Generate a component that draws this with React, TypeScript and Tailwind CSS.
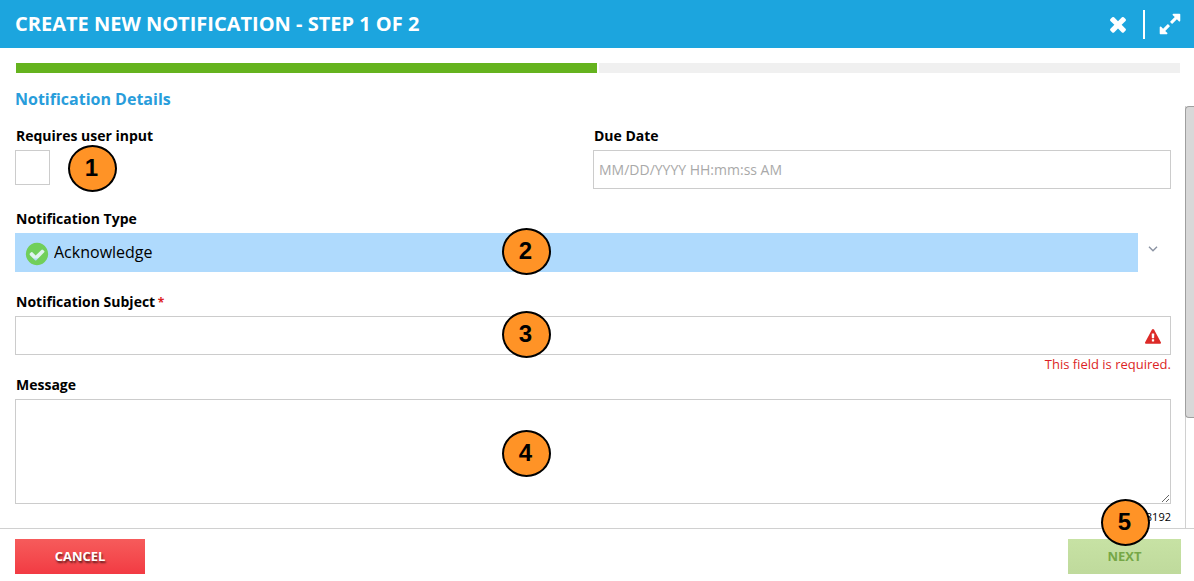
import type { ReactNode } from "react";

const TIMES =
  "M1490 1322q0 40-28 68l-136 136q-28 28-68 28t-68-28l-294-294-294 294q-28 28-68 28t-68-28l-136-136q-28-28-28-68t28-68l294-294-294-294q-28-28-28-68t28-68l136-136q28-28 68-28t68 28l294 294 294-294q28-28 68-28t68 28l136 136q28 28 28 68t-28 68l-294 294 294 294q28 28 28 68z";
const EXPAND =
  "M883 1056q0 13-10 23l-332 332 144 144q19 19 19 45t-19 45-45 19H192q-26 0-45-19t-19-45v-448q0-26 19-45t45-19 45 19l144 144 332-332q10-10 23-10t23 10l114 114q10 10 10 23zm781-864v448q0 26-19 45t-45 19-45-19l-144-144-332 332q-10 10-23 10t-23-10L919 759q-10-10-10-23t10-23l332-332-144-144q-19-19-19-45t19-45 45-19h448q26 0 45 19t19 45z";
const CHECK =
  "M1412 734q0-28-18-46l-91-90q-19-19-45-19t-45 19l-408 407-226-226q-19-19-45-19t-45 19l-91 90q-18 18-18 46 0 27 18 45l362 362q19 19 45 19 27 0 46-19l543-543q18-18 18-45zm252 162q0 209-103 385.5t-279.5 279.5-385.5 103-385.5-103-279.5-279.5-103-385.5 103-385.5 279.5-279.5 385.5-103 385.5 103 279.5 279.5 103 385.5z";
const WARNING =
  "M1024 1375v-190q0-14-9.5-23.5t-22.5-9.5h-192q-13 0-22.5 9.5t-9.5 23.5v190q0 14 9.5 23.5t22.5 9.5h192q13 0 22.5-9.5t9.5-23.5zm-2-374l18-459q0-12-10-19-13-11-24-11h-220q-11 0-24 11-10 7-10 21l17 457q0 10 10 16.5t24 6.5h185q14 0 23.5-6.5t10.5-16.5zm-14-934l768 1408q35 63-2 126-17 29-46.5 46t-63.5 17h-1536q-34 0-63.5-17t-46.5-46q-37-63-2-126l768-1408q17-31 47-49t65-18 65 18 47 49z";

function Icon({ path, className }: { path: string; className: string }) {
  return (
    <svg viewBox="0 0 1792 1792" fill="currentColor" aria-hidden="true" className={className}>
      <path d={path} />
    </svg>
  );
}

function Marker({ n, className }: { n: number; className: string }) {
  return (
    <span
      className={`pointer-events-none absolute z-10 flex h-[47px] w-[49px] items-center justify-center rounded-[50%] border-2 border-black bg-[#ff9326] pr-0.5 pb-0.5 font-['Liberation_Sans',sans-serif] text-2xl leading-6 font-bold text-black ${className}`}
    >
      {n}
    </span>
  );
}

function Label({ htmlFor, children }: { htmlFor: string; children: ReactNode }) {
  return (
    <label htmlFor={htmlFor} className="mb-1 block pl-px text-sm leading-5 font-bold">
      {children}
    </label>
  );
}

export default function App() {
  return (
    <div className="flex h-screen flex-col bg-white font-['Open_Sans','Noto_Sans',sans-serif] text-black">
      <header className="flex h-12 shrink-0 items-center justify-between bg-[#1ca5de] pr-3 pl-[15px] text-white">
        <h1 className="text-xl leading-6 font-bold">CREATE NEW NOTIFICATION - STEP 1 OF 2</h1>
        <div className="flex items-center gap-[13px]">
          <button type="button" aria-label="Close">
            <Icon path={TIMES} className="size-6" />
          </button>
          <span className="h-[29px] w-0.5 bg-white" />
          <button type="button" aria-label="Expand">
            <Icon path={EXPAND} className="size-6" />
          </button>
        </div>
      </header>

      <div className="mt-[15px] mr-3.5 ml-4 flex h-2.5 shrink-0 gap-0.5">
        <div className="flex-1 bg-[#65b31e]" />
        <div className="flex-1 bg-[#f0f0f0]" />
      </div>

      <main className="flex min-h-0 flex-1">
        <form id="notification" className="min-w-0 flex-1 overflow-hidden pt-4 pr-3.5 pl-[15px]">
          <h2 className="mb-[17px] text-base leading-5 font-bold text-[#289ddb]">Notification Details</h2>

          <div className="grid grid-cols-2">
            <div className="relative">
              <Label htmlFor="requires-input">Requires user input</Label>
              <input
                id="requires-input"
                type="checkbox"
                className="block size-[35px] appearance-none border border-[#cccccc] bg-white"
              />
              <Marker n={1} className="top-[19px] left-[53px]" />
            </div>
            <div>
              <Label htmlFor="due-date">Due Date</Label>
              <input
                id="due-date"
                type="text"
                placeholder="MM/DD/YYYY HH:mm:ss AM"
                className="block h-[39px] w-full border border-[#cccccc] px-[5px] text-sm placeholder:text-[#a9a9a9]"
              />
            </div>
          </div>

          <div className="mt-5">
            <Label htmlFor="type">Notification Type</Label>
            <div className="relative flex">
              <select
                id="type"
                className="h-[39px] min-w-0 flex-1 appearance-none bg-[#afdafd] pb-0.5 pl-[39px] text-base"
              >
                <option>Acknowledge</option>
              </select>
              <span className="flex w-[33px] justify-center pt-[13px] pr-1">
                <svg viewBox="0 0 10 6" className="h-1.5 w-2.5" fill="none" stroke="#8b93a3" strokeWidth="1.4">
                  <path d="M1 .7 5 4.7 9 .7" />
                </svg>
              </span>
              <span className="pointer-events-none absolute top-2 left-[9px] text-[#71cf5a]">
                <svg viewBox="0 0 1792 1792" className="size-[26px]" aria-hidden="true">
                  <path d="M400 600h1050v600H400z" fill="#dff3ee" />
                  <path d={CHECK} fill="currentColor" />
                </svg>
              </span>
              <Marker n={2} className="-top-[5px] left-[487px]" />
            </div>
          </div>

          <div className="mt-5">
            <Label htmlFor="subject">
              Notification Subject <span className="-ml-px text-xs text-[#dd2222]">*</span>
            </Label>
            <div className="relative">
              <input
                id="subject"
                type="text"
                aria-describedby="subject-error"
                className="block h-[39px] w-full border border-[#cccccc] pr-9 pl-[5px] text-sm"
              />
              <Icon path={WARNING} className="absolute top-[13px] right-2.5 size-4 text-[#dc2a27]" />
              <Marker n={3} className="-top-[5px] left-[487px]" />
            </div>
            <p id="subject-error" className="pb-0.5 text-right text-[13px] leading-[18px] text-[#dc1f26]">
              This field is required.
            </p>
          </div>

          <div>
            <Label htmlFor="message">Message</Label>
            <div className="relative">
              <textarea
                id="message"
                className="block h-[105px] w-full resize-y border border-[#cccccc] p-[5px] text-sm"
              />
              <Marker n={4} className="top-[31px] left-[487px]" />
            </div>
            <p className="pt-[5px] text-right text-[11px] leading-4">8192</p>
          </div>
        </form>

        <div className="mt-[33px] w-[9px] shrink-0 border-l border-[#d0d0d0]">
          <div className="-ml-px h-[312px] rounded-l-sm border border-r-0 border-[#9f9f9f] bg-[#d8d8d8]" />
        </div>
      </main>

      <footer className="flex h-[53px] shrink-0 items-start justify-between border-t border-[#d0d0d0] pt-2.5 pr-[13px] pl-[15px]">
        <button
          type="button"
          className="h-[35px] w-[130px] bg-linear-to-b from-[#f65b5b] to-[#f23a43] text-[13px] font-bold text-white [text-shadow:1px_2px_2px_rgba(0,0,0,0.6)]"
        >
          CANCEL
        </button>
        <div className="relative">
          <button
            type="submit"
            form="notification"
            className="block h-[35px] w-[113px] bg-linear-to-b from-[#c7e2a4] to-[#bfda9c] text-[13px] font-bold text-[#76a747]"
          >
            NEXT
          </button>
          <Marker n={5} className="-top-10 left-[33px]" />
        </div>
      </footer>
    </div>
  );
}
